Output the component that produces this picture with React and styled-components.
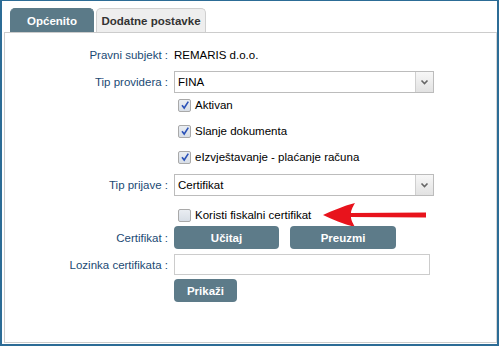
import styled, { createGlobalStyle } from 'styled-components';

const GlobalStyle = createGlobalStyle`
  html, body {
    margin: 0;
    padding: 0;
    background: #ffffff;
  }
  body {
    font-family: "Liberation Sans", Arial, sans-serif;
    font-size: 11.5px;
  }
`;

const Frame = styled.div`
  box-sizing: border-box;
  width: 499px;
  height: 346px;
  border: 2px solid #2c6c96;
  border-top-width: 1px;
  background: #ffffff;
  display: flex;
  flex-direction: column;
  padding: 0 0 1px 2px;
`;

const TabBar = styled.div`
  display: flex;
  gap: 2px;
  padding: 7px 0 0 6px;
  height: 24px;
`;

const Tab = styled.div`
  box-sizing: border-box;
  width: ${(p) => p.$w}px;
  height: 25px;
  display: flex;
  align-items: center;
  justify-content: center;
  font-weight: bold;
  font-size: 11.5px;
  border-radius: 5px 5px 0 0;
  border: 1px solid ${(p) => (p.$active ? '#5b7a88' : '#cfcfcf')};
  border-bottom: none;
  background: ${(p) => (p.$active ? '#5b7a88' : '#eeeeee')};
  color: ${(p) => (p.$active ? '#ffffff' : '#333333')};
`;

const Panel = styled.div`
  flex: 1;
  border: 1px solid #cccccc;
  border-right-color: #d6d6d6;
  padding-top: 14px;
  display: flex;
  flex-direction: column;
`;

const Row = styled.div`
  display: grid;
  grid-template-columns: 163px 1fr;
  column-gap: 6px;
  align-items: center;
  height: ${(p) => p.$h}px;
  margin-top: ${(p) => p.$mt || 0}px;
`;

const Label = styled.div`
  text-align: right;
  color: #1b4a74;
  white-space: nowrap;
`;

const Value = styled.div`
  display: flex;
  align-items: center;
  color: #000000;
`;

const Select = styled.div`
  box-sizing: border-box;
  width: 260px;
  height: 22px;
  border: 1px solid #bcbcbc;
  display: flex;
  align-items: stretch;
  background: #ffffff;
`;

const SelectText = styled.div`
  flex: 1;
  display: flex;
  align-items: center;
  padding-left: 3px;
  color: #000000;
`;

const SelectButton = styled.div`
  width: 17px;
  border-left: 1px solid #cfcfcf;
  background: linear-gradient(#f7f7f7, #e2e2e2);
  display: flex;
  align-items: center;
  justify-content: center;
`;

const CheckRow = styled.label`
  display: flex;
  align-items: center;
  padding-left: 4px;
  color: #000000;
`;

const Box = styled.span`
  box-sizing: border-box;
  width: 13px;
  height: 13px;
  border: 1px solid #a9a9a9;
  border-radius: 2px;
  background: linear-gradient(#e9edf2, #d8dee6);
  display: inline-flex;
  align-items: center;
  justify-content: center;
  margin-right: 4px;
`;

const ButtonRow = styled.div`
  display: flex;
  gap: 11px;
`;

const Button = styled.button`
  box-sizing: border-box;
  width: ${(p) => p.$w}px;
  height: 23px;
  border: none;
  border-radius: 4px;
  background: #5d7b89;
  color: #ffffff;
  font-family: "Liberation Sans", Arial, sans-serif;
  font-size: 11.5px;
  font-weight: bold;
  padding: 0;
`;

const Input = styled.input`
  box-sizing: border-box;
  width: 256px;
  height: 21px;
  border: 1px solid #cccccc;
  outline: none;
  padding: 0 3px;
`;

const Arrow = styled.svg`
  margin-left: 12px;
`;

const Chevron = () => (
  <svg width="9" height="6" viewBox="0 0 9 6">
    <path d="M1.5 1.5 L4.5 4.5 L7.5 1.5" fill="none" stroke="#666" strokeWidth="1.6" />
  </svg>
);

const Check = ({ checked, children }) => (
  <CheckRow>
    <Box>
      {checked && (
        <svg width="10" height="10" viewBox="0 0 10 10">
          <path d="M2 5.2 L4.2 8 L8.3 1.6" fill="none" stroke="#2b52b8" strokeWidth="1.6" />
        </svg>
      )}
    </Box>
    {children}
  </CheckRow>
);

const App = () => {
  return (
    <>
      <GlobalStyle />
      <Frame>
        <TabBar>
          <Tab $active $w={84}>Općenito</Tab>
          <Tab $w={110}>Dodatne postavke</Tab>
        </TabBar>
        <Panel>
          <Row $h={16}>
            <Label>Pravni subjekt :</Label>
            <Value>REMARIS d.o.o.</Value>
          </Row>
          <Row $h={22} $mt={8}>
            <Label>Tip providera :</Label>
            <Value>
              <Select>
                <SelectText>FINA</SelectText>
                <SelectButton><Chevron /></SelectButton>
              </Select>
            </Value>
          </Row>
          <Row $h={16} $mt={4}>
            <span />
            <Check checked>Aktivan</Check>
          </Row>
          <Row $h={16} $mt={10}>
            <span />
            <Check checked>Slanje dokumenta</Check>
          </Row>
          <Row $h={16} $mt={10}>
            <span />
            <Check checked>eIzvještavanje - plaćanje računa</Check>
          </Row>
          <Row $h={22} $mt={9}>
            <Label>Tip prijave :</Label>
            <Value>
              <Select>
                <SelectText>Certifikat</SelectText>
                <SelectButton><Chevron /></SelectButton>
              </Select>
            </Value>
          </Row>
          <Row $h={16} $mt={7}>
            <span />
            <Value>
              <Check>Koristi fiskalni certifikat</Check>
              <Arrow width="104" height="24" viewBox="0 0 104 24">
                <path
                  d="M0 12 C9 8 20 3 32 0 C29 5 28 8 28 10 L103 9.5 L103 14.5 L28 14 C28 16 29 19 32 24 C20 21 9 16 0 12 Z"
                  fill="#e8131c"
                />
              </Arrow>
            </Value>
          </Row>
          <Row $h={23} $mt={7}>
            <Label>Certifikat :</Label>
            <ButtonRow>
              <Button $w={105}>Učitaj</Button>
              <Button $w={106}>Preuzmi</Button>
            </ButtonRow>
          </Row>
          <Row $h={21} $mt={5}>
            <Label>Lozinka certifikata :</Label>
            <Value>
              <Input type="password" />
            </Value>
          </Row>
          <Row $h={23} $mt={4}>
            <span />
            <Value>
              <Button $w={63}>Prikaži</Button>
            </Value>
          </Row>
        </Panel>
      </Frame>
    </>
  );
};

export default App;
